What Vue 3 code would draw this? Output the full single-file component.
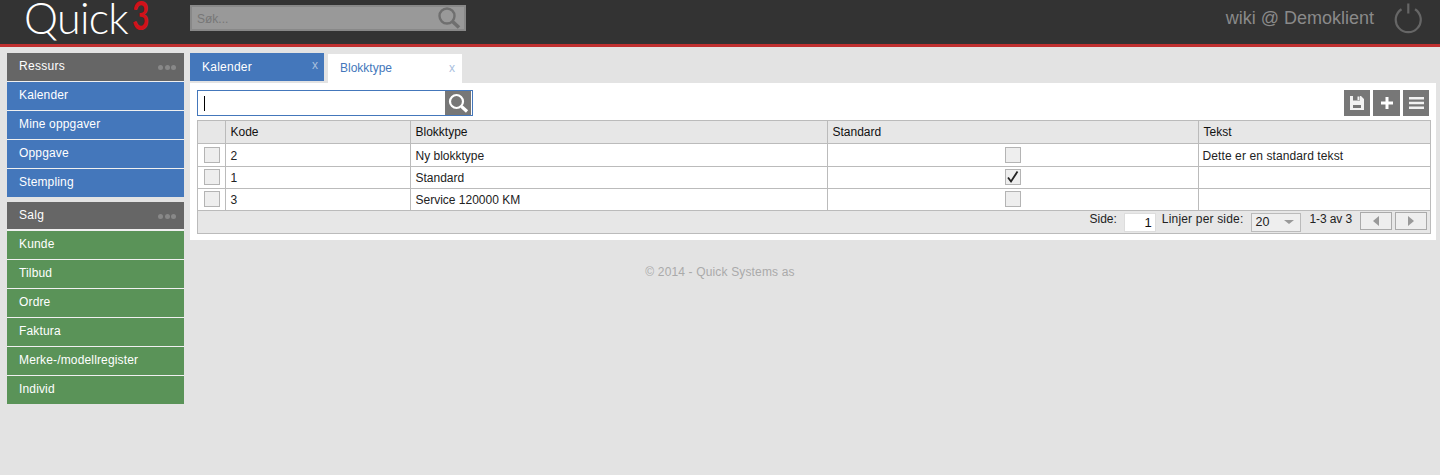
<script setup>
const ressurs = ['Kalender', 'Mine oppgaver', 'Oppgave', 'Stempling']
const salg = ['Kunde', 'Tilbud', 'Ordre', 'Faktura', 'Merke-/modellregister', 'Individ']
const rows = [
  { kode: '2', type: 'Ny blokktype', std: false, tekst: 'Dette er en standard tekst' },
  { kode: '1', type: 'Standard', std: true, tekst: '' },
  { kode: '3', type: 'Service 120000 KM', std: false, tekst: '' }
]
</script>

<template>
  <div class="page">
    <header class="topbar">
      <div class="logo">Quick<span class="logo-three">3</span></div>
      <div class="top-search">
        <span class="top-search-ph">Søk...</span>
        <svg class="top-search-icon" width="24" height="24" viewBox="0 0 24 24" fill="none" stroke="#6f6f6f">
          <circle cx="10" cy="10" r="7.500" stroke-width="2.400" />
          <path d="M15.500 15.500 22 21.500" stroke-width="3.600" />
        </svg>
      </div>
      <div class="user">wiki @ Demoklient</div>
      <svg class="power" width="28" height="32" viewBox="0 0 28 32" fill="none" stroke="#666" stroke-width="2.200">
        <path d="M7.500 7.200A12.500 12.500 0 1 0 21 7.200" />
        <path d="M14.300 1.500v10" />
      </svg>
    </header>

    <div class="body">
      <aside class="sidebar">
        <section class="group">
          <div class="group-head">
            <span>Ressurs</span>
            <span class="dots"><i></i><i></i><i></i></span>
          </div>
          <div v-for="item in ressurs" :key="item" class="nav blue">{{ item }}</div>
        </section>
        <section class="group">
          <div class="group-head short">
            <span>Salg</span>
            <span class="dots"><i></i><i></i><i></i></span>
          </div>
          <div v-for="item in salg" :key="item" class="nav green">{{ item }}</div>
        </section>
      </aside>

      <main class="main">
        <div class="tabs">
          <div class="tab tab-off">Kalender<span class="x">x</span></div>
          <div class="tab tab-on">Blokktype<span class="x">x</span></div>
        </div>
        <div class="panel">
          <div class="toolbar">
            <div class="find">
              <span class="caret"></span>
              <span class="find-btn">
                <svg width="22" height="22" viewBox="0 0 22 22" fill="none" stroke="#fff">
                  <circle cx="9.500" cy="9.500" r="6.500" stroke-width="2.200" />
                  <path d="M14.500 14.500 20 19.500" stroke-width="3.200" />
                </svg>
              </span>
            </div>
            <div class="actions">
              <span class="act">
                <svg width="14" height="14" viewBox="0 0 14 14" fill="#f2f2f2">
                  <path fill-rule="evenodd" d="M0 0H11L14 3V14H0ZM3 0V4.500H10V0ZM3 9V12H11V9Z" />
                  <path d="M7.500 .5h2v3.500h-2z" />
                </svg>
              </span>
              <span class="act wide">
                <svg width="12" height="12" viewBox="0 0 12 12" fill="#fff"><path d="M4.500 0h3v4.500H12v3H7.500V12h-3V7.500H0v-3h4.500z" /></svg>
              </span>
              <span class="act">
                <svg width="15" height="12" viewBox="0 0 15 12" fill="#f2f2f2"><path d="M0 0h15v2.400H0zM0 4.800h15v2.400H0zM0 9.600h15V12H0z" /></svg>
              </span>
            </div>
          </div>

          <div class="grid">
            <table>
              <colgroup>
                <col class="c0" /><col class="c1" /><col class="c2" /><col class="c3" /><col />
              </colgroup>
              <thead>
                <tr><th></th><th>Kode</th><th>Blokktype</th><th>Standard</th><th>Tekst</th></tr>
              </thead>
              <tbody>
                <tr v-for="row in rows" :key="row.kode">
                  <td class="cb-cell first"><span class="cb"></span></td>
                  <td>{{ row.kode }}</td>
                  <td>{{ row.type }}</td>
                  <td class="cb-cell">
                    <span class="cb">
                      <svg v-if="row.std" width="14" height="14" viewBox="0 0 14 14" fill="none" stroke="#222" stroke-width="1.800">
                        <path d="M2 7.500 5 11.500 11.500 1.500" />
                      </svg>
                    </span>
                  </td>
                  <td class="last">{{ row.tekst }}</td>
                </tr>
              </tbody>
            </table>
            <div class="pager">
              <span class="p-label">Side:</span>
              <span class="p-input">1</span>
              <span class="p-label wide-label">Linjer per side:</span>
              <span class="p-select">20<i class="tri-down"></i></span>
              <span class="p-label range">1-3 av 3</span>
              <span class="p-btn"><i class="tri-left"></i></span>
              <span class="p-btn"><i class="tri-right"></i></span>
            </div>
          </div>
        </div>
        <footer class="copy">© 2014 - Quick Systems as</footer>
      </main>
    </div>
  </div>
</template>

<style>
html, body { margin: 0; background: #e3e3e3; }
</style>

<style scoped>
.page {
  min-height: 475px;
  background: #e3e3e3;
  font: 12px/14px "Liberation Sans", Arial, sans-serif;
}

.topbar {
  height: 44px;
  background: #333;
  border-bottom: 3px solid #c03030;
  display: flex;
  align-items: flex-start;
  padding-left: 24px;
  padding-right: 18px;
}
.logo {
  width: 166px;
  flex: none;
  font: 300 43px/35px Lato, sans-serif;
  color: #fff;
  letter-spacing: -0.7px;
  white-space: nowrap;
}
.logo-three {
  display: inline-block;
  width: 18px;
  margin-left: 4px;
  color: #d0121a;
  font-weight: 700;
  font-size: 40px;
  line-height: 30px;
  vertical-align: 4px;
  transform: scaleX(0.75);
  transform-origin: 0 50%;
}
.top-search {
  width: 264px;
  height: 22px;
  margin-top: 5px;
  background: #999;
  border: 2px solid #888;
  display: flex;
  align-items: center;
  justify-content: space-between;
  padding: 0 3px 0 5px;
}
.top-search-ph { color: #777; margin-top: 2px; }
.top-search-icon { flex: none; }
.user {
  margin-left: auto;
  margin-top: 8px;
  font-size: 18px;
  line-height: 20px;
  color: #8a8a8a;
}
.power { margin: 2px 0 0 20px; flex: none; }

.body {
  display: flex;
  align-items: flex-start;
  padding: 6px 4px 0 7px;
  gap: 6px;
}

.sidebar {
  width: 177px;
  flex: none;
  display: flex;
  flex-direction: column;
  gap: 5px;
}
.group { display: flex; flex-direction: column; }
.group-head, .nav {
  height: 29px;
  box-sizing: border-box;
  padding: 6px 12px 0;
  color: #fff;
  border-bottom: 1px solid #f0f0f0;
  letter-spacing: 0.15px;
}
.group-head {
  background: #666;
  display: flex;
  justify-content: space-between;
  letter-spacing: 0.3px;
}
.group-head.short { border-bottom-width: 2px; }
.nav.blue { background: #4477bb; }
.nav.green { background: #5a9358; }
.group .nav:last-child { border-bottom: 0; height: 28px; }
.dots { display: flex; gap: 1.500px; padding: 6px 0 0; margin-right: -4px; }
.dots i { width: 5px; height: 5px; border-radius: 50%; background: #888; }

.main { flex: 1; min-width: 0; }
.tabs { display: flex; gap: 4px; height: 30px; align-items: flex-start; }
.tab {
  width: 134px;
  box-sizing: border-box;
  position: relative;
}
.tab-off {
  height: 28px;
  background: #4477bb;
  color: #fff;
  padding: 7px 12px 0;
  letter-spacing: 0.25px;
}
.tab-on {
  height: 29px;
  margin-top: 1px;
  background: #fff;
  color: #4477bb;
  padding: 7px 12px 0;
}
.x {
  position: absolute;
  right: 6px;
  top: 5px;
  font-size: 12px;
  color: #a9c0de;
  letter-spacing: 0;
}
.tab-on .x { top: 7px; right: 7px; }

.panel {
  background: #fff;
  padding: 7px 5px 6px 7px;
}
.toolbar {
  display: flex;
  justify-content: space-between;
  align-items: flex-start;
  height: 30px;
}
.find {
  width: 273px;
  height: 24px;
  border: 1px solid #4477bb;
  background: #fff;
  display: flex;
  align-items: center;
  justify-content: space-between;
  padding-right: 1px;
}
.caret { width: 1px; height: 15px; background: #000; margin-left: 6px; }
.find-btn {
  width: 26px;
  height: 24px;
  background: #777;
  display: flex;
  align-items: center;
  justify-content: center;
}
.actions { display: flex; gap: 3px; padding-right: 2px; }
.act {
  width: 26px;
  height: 26px;
  background: #777;
  display: flex;
  align-items: center;
  justify-content: center;
}
.act.wide { width: 27px; }

.grid {
  border: 1px solid #bbb;
  background: #e7e7e7;
}
table {
  width: 100%;
  border-collapse: collapse;
  table-layout: fixed;
  background: #fff;
}
.c0 { width: 27px; }
.c1 { width: 185px; }
.c2 { width: 417px; }
.c3 { width: 371px; }
th, td {
  text-align: left;
  font-weight: 400;
  border-left: 1px solid #bbb;
  border-bottom: 1px solid #bbb;
  color: #222;
}
td { padding: 1px 4px 0 5px; height: 20px; }
th {
  height: 22px;
  background: #e7e7e7;
  color: #111;
  padding: 0 4px 0 5px;
}
th:first-child, td:first-child { border-left: 0; }
tbody tr:first-child td { height: 20px; padding-top: 2px; }
.last { padding-left: 4px; letter-spacing: 0.1px; }
td.cb-cell { text-align: center; padding: 0 0 1px; height: 20px; }
td.cb-cell.first { padding-left: 2px; }
tbody tr:first-child td.cb-cell { padding-top: 0; padding-bottom: 0; height: 22px; }
.cb {
  display: inline-flex;
  align-items: center;
  justify-content: center;
  width: 14px;
  height: 14px;
  vertical-align: middle;
  border: 1px solid #b4b4b4;
  background: #eee;
}

.pager {
  height: 22px;
  display: flex;
  align-items: flex-start;
  justify-content: flex-end;
  padding-right: 3px;
  color: #222;
}
.p-label { margin-top: 1px; }
.wide-label { letter-spacing: 0.18px; }
.range { letter-spacing: -0.1px; }
.p-input {
  width: 32px;
  height: 19px;
  box-sizing: border-box;
  margin: 2px 6px 0 7px;
  background: #fff;
  border: 1px solid #ddd;
  text-align: right;
  font-size: 13px;
  line-height: 15px;
  padding: 1px 3px 0 0;
  color: #111;
}
.p-select {
  width: 50px;
  height: 19px;
  box-sizing: border-box;
  margin: 2px 8px 0 8px;
  background: #eee;
  border: 1px solid #bbb;
  font-size: 12.500px;
  line-height: 15px;
  padding: 1px 3px;
  position: relative;
}
.tri-down {
  position: absolute;
  right: 6px;
  top: 6px;
  border: 5px solid transparent;
  border-top: 4px solid #999;
  border-bottom: 0;
}
.p-btn {
  width: 32px;
  height: 18px;
  box-sizing: border-box;
  margin: 1px 0 0 3px;
  border: 1px solid #aaa;
  background: #eee;
  display: flex;
  align-items: center;
  justify-content: center;
}
.p-label + .p-btn { margin-left: 8px; }
.tri-left { border: 5.500px solid transparent; border-right: 6px solid #999; border-left: 0; }
.tri-right { border: 5.500px solid transparent; border-left: 6px solid #999; border-right: 0; }

.copy {
  margin-top: 25px;
  text-align: center;
  color: #aaa;
  letter-spacing: 0.15px;
  padding-right: 186px;
}
</style>
